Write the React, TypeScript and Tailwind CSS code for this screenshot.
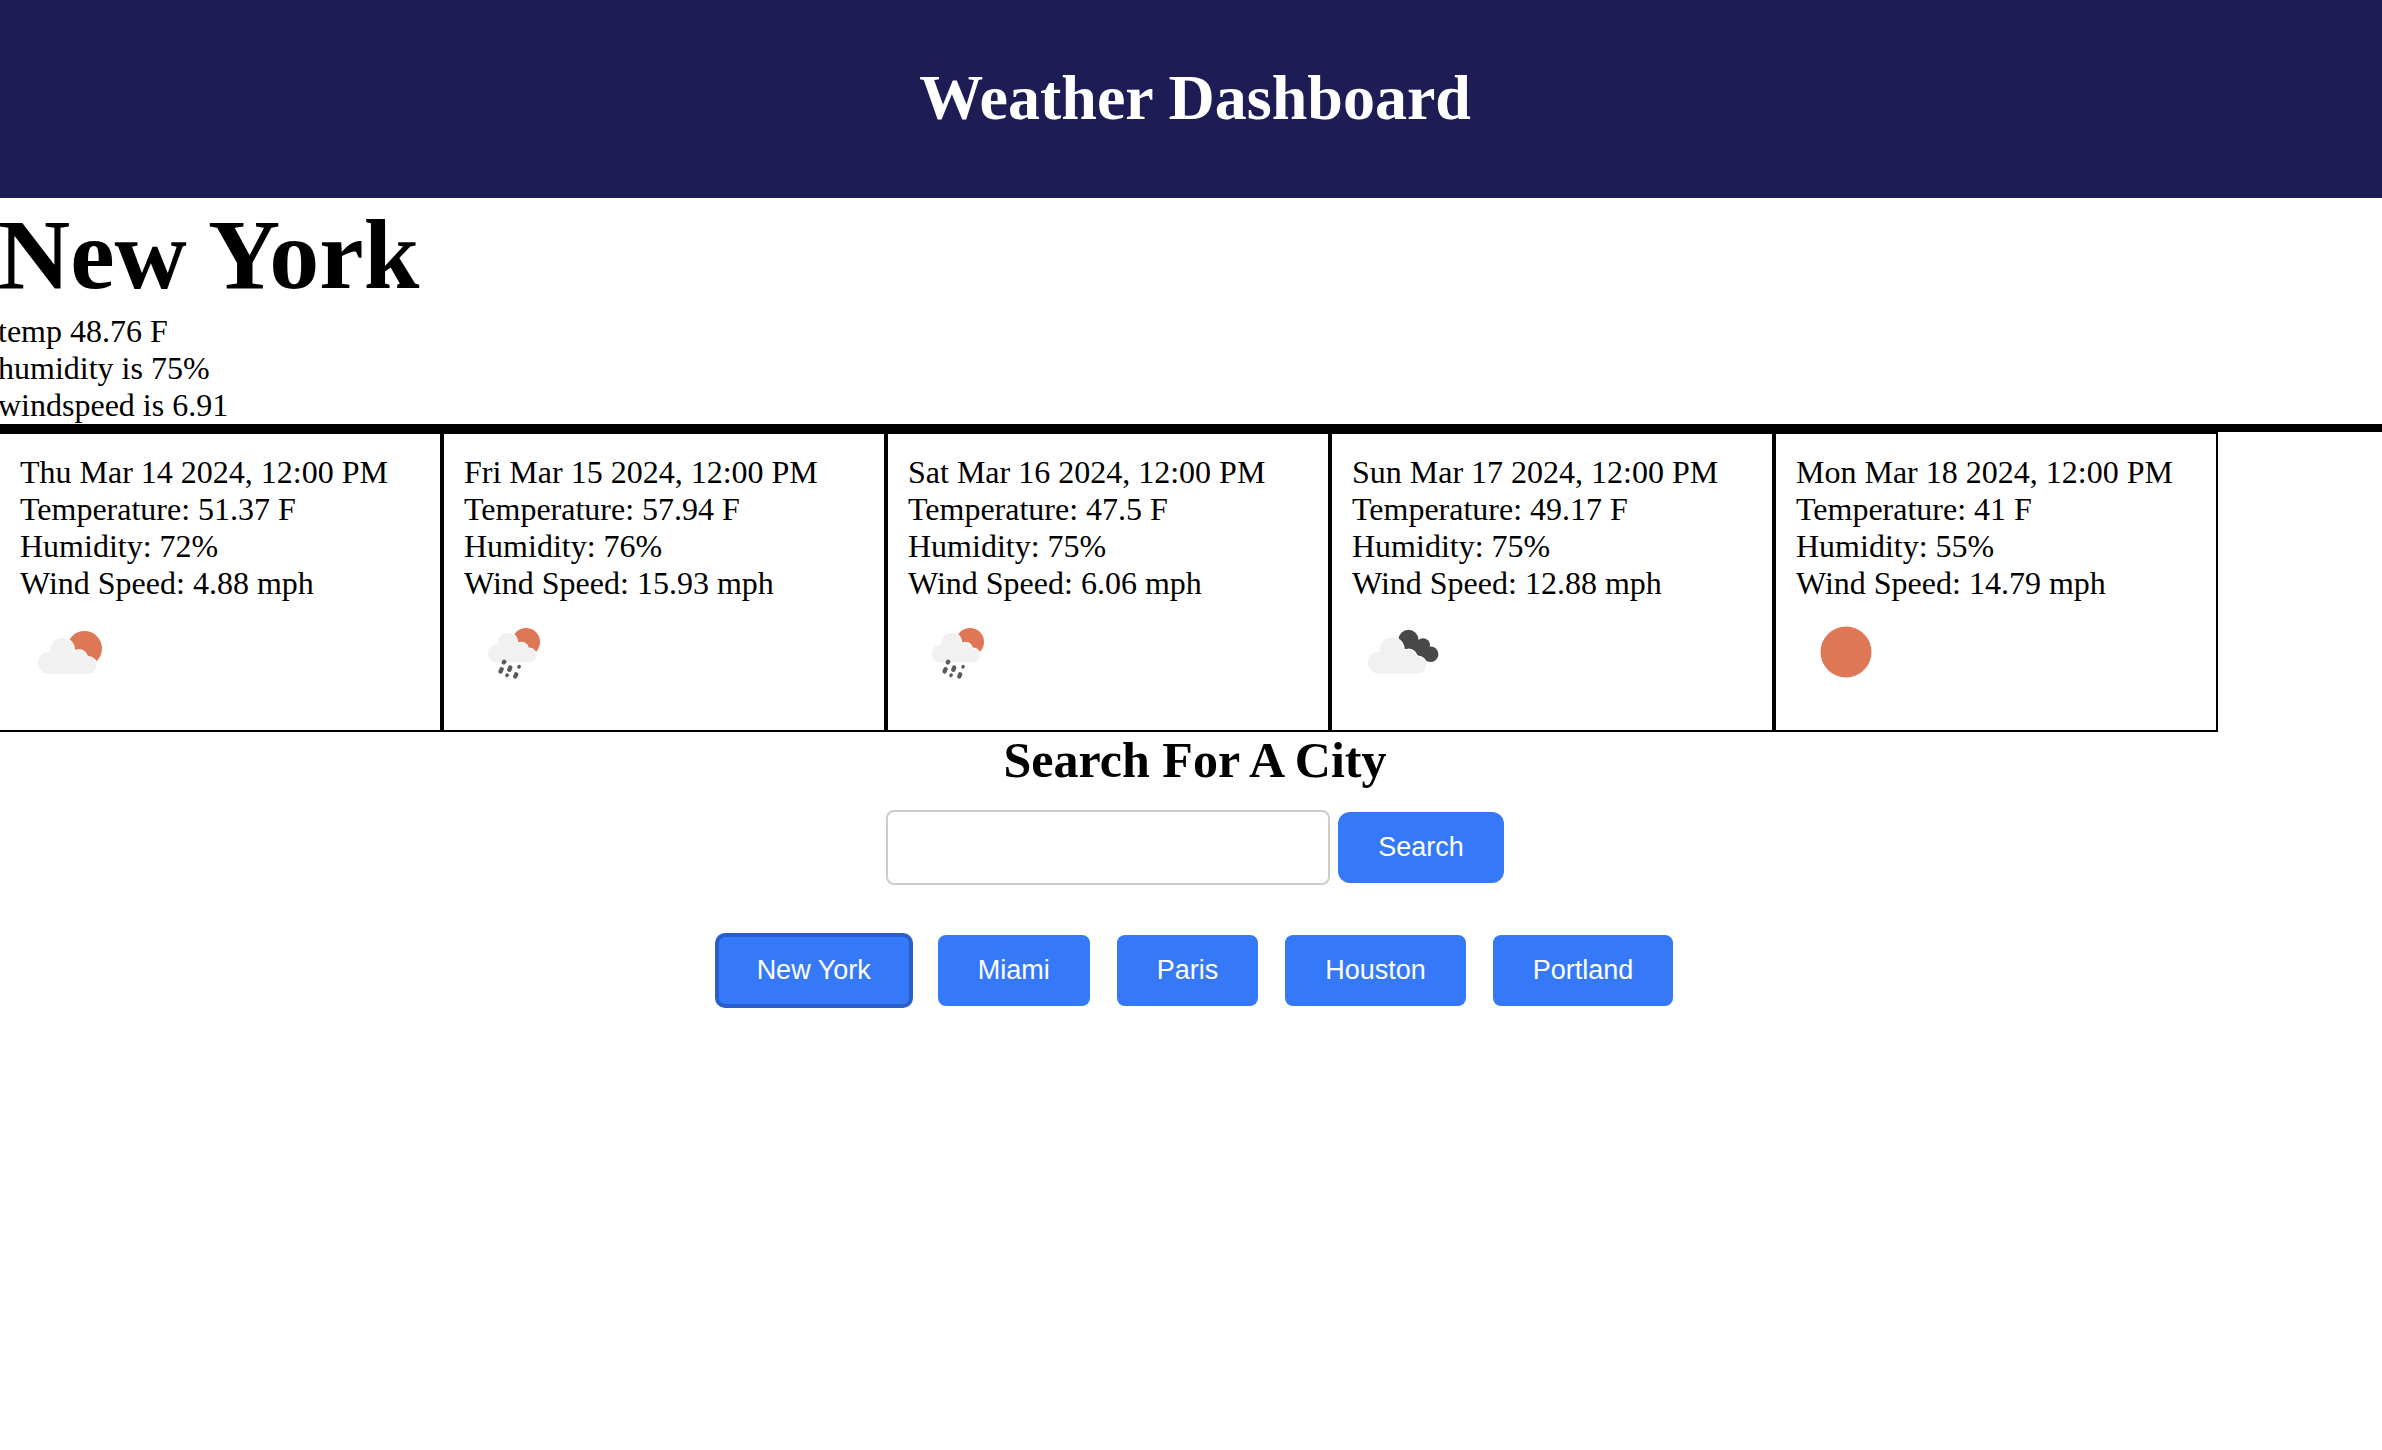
import React from "react";

type IconKind = "fewClouds" | "rain" | "brokenClouds" | "clear";

interface Forecast {
  date: string;
  temperature: string;
  humidity: string;
  wind: string;
  icon: IconKind;
}

const forecasts: Forecast[] = [
  { date: "Thu Mar 14 2024, 12:00 PM", temperature: "51.37", humidity: "72", wind: "4.88", icon: "fewClouds" },
  { date: "Fri Mar 15 2024, 12:00 PM", temperature: "57.94", humidity: "76", wind: "15.93", icon: "rain" },
  { date: "Sat Mar 16 2024, 12:00 PM", temperature: "47.5", humidity: "75", wind: "6.06", icon: "rain" },
  { date: "Sun Mar 17 2024, 12:00 PM", temperature: "49.17", humidity: "75", wind: "12.88", icon: "brokenClouds" },
  { date: "Mon Mar 18 2024, 12:00 PM", temperature: "41", humidity: "55", wind: "14.79", icon: "clear" },
];

const cities = ["New York", "Miami", "Paris", "Houston", "Portland"];

function CloudShape() {
  return (
    <g>
      <circle cx="29" cy="61" r="11" />
      <circle cx="42" cy="48" r="12" />
      <circle cx="59" cy="56" r="8" />
      <circle cx="68" cy="63.5" r="8.5" />
      <path d="M29 72V52L42 48L59 52L68 64V72Z" />
    </g>
  );
}

/* Light cloud with a thin white rim that separates it from what lies behind. */
function Cloud() {
  return (
    <>
      <g fill="#fff" stroke="#fff" strokeWidth="2">
        <CloudShape />
      </g>
      <g fill="#f1f1f1">
        <CloudShape />
      </g>
    </>
  );
}

function WeatherIcon({ kind }: { kind: IconKind }) {
  return (
    <svg viewBox="0 0 100 100" className="size-[100px]" role="img" aria-label={kind}>
      {kind === "clear" && <circle cx="50" cy="50" r="25.5" fill="#dd7756" />}
      {kind === "fewClouds" && (
        <>
          <circle cx="64.5" cy="46.5" r="17.5" fill="#dd7756" />
          <Cloud />
        </>
      )}
      {kind === "brokenClouds" && (
        <>
          <g fill="#484848">
            <circle cx="56.5" cy="37.8" r="10" />
            <circle cx="71" cy="43.3" r="7" />
            <circle cx="78.7" cy="52.3" r="7.7" />
            <path d="M54 40L68 38L78 50L76 59.5L60 50Z" />
          </g>
          <g transform="translate(-2.3 -0.5)">
            <Cloud />
          </g>
        </>
      )}
      {kind === "rain" && (
        <>
          <circle cx="62" cy="40" r="14" fill="#dd7756" />
          <g transform="translate(8.9 1) scale(0.825)">
            <Cloud />
          </g>
          <g stroke="#5a5a5a" strokeLinecap="round">
            <path strokeWidth="4.4" d="M40.2 59.8L39.8 60.4M37.6 67.2L36.6 69.4M46.2 65.6L45.3 67.8M52.2 72.4L51.3 74.4" />
            <path strokeWidth="3.4" d="M55.2 64.4L54.9 65M43.2 73L42.9 73.6" />
          </g>
        </>
      )}
    </svg>
  );
}

function ForecastCard({ day }: { day: Forecast }) {
  return (
    <li className="w-[444px] border-2 border-black px-5 pt-5 pb-7">
      <p>{day.date}</p>
      <p>Temperature: {day.temperature} F</p>
      <p>Humidity: {day.humidity}%</p>
      <p>Wind Speed: {day.wind} mph</p>
      <WeatherIcon kind={day.icon} />
    </li>
  );
}

export default function App() {
  return (
    <div className="min-h-screen overflow-x-hidden bg-white">
      <div className="-mr-2.5 -ml-0.5 font-['Liberation_Serif',serif] text-[32px] leading-[37px] text-black">
        <header className="bg-[#1d1c54] pt-[61px] pb-[63px] text-center text-white">
          <h1 className="text-[64px] leading-[74px] font-bold">Weather Dashboard</h1>
        </header>

        <main>
          <section>
            <h2 className="pb-0.5 text-[100px] leading-[113px] font-bold">New York</h2>
            <p>temp 48.76 F</p>
            <p>humidity is 75%</p>
            <p>windspeed is 6.91</p>
          </section>

          <ul className="flex flex-wrap border-t-8 border-black">
            {forecasts.map((day) => (
              <ForecastCard key={day.date} day={day} />
            ))}
          </ul>

          <section className="flex flex-col items-center font-['Liberation_Sans',sans-serif] text-[27px] leading-[31px]">
            <h2 className="font-['Liberation_Serif',serif] text-[50px] leading-[56px] font-bold">
              <label htmlFor="city">Search For A City</label>
            </h2>
            <form className="mt-[22px] flex items-center gap-2" onSubmit={(e) => e.preventDefault()}>
              <input
                id="city"
                type="text"
                className="h-[75px] w-[444px] rounded-lg border-2 border-[#ccc] bg-white px-5 outline-none"
              />
              <button type="submit" className="rounded-xl bg-[#3679f8] px-10 py-5 text-white">
                Search
              </button>
            </form>
            <div className="mt-[50px] flex gap-[27px]">
              {cities.map((city, i) => (
                <button
                  key={city}
                  type="button"
                  className={
                    i === 0
                      ? "rounded-lg bg-[#3679f8] px-10 py-5 text-white outline-4 -outline-offset-2 outline-[#295fca]"
                      : "rounded-lg bg-[#3679f8] px-10 py-5 text-white"
                  }
                >
                  {city}
                </button>
              ))}
            </div>
          </section>
        </main>
      </div>
    </div>
  );
}
